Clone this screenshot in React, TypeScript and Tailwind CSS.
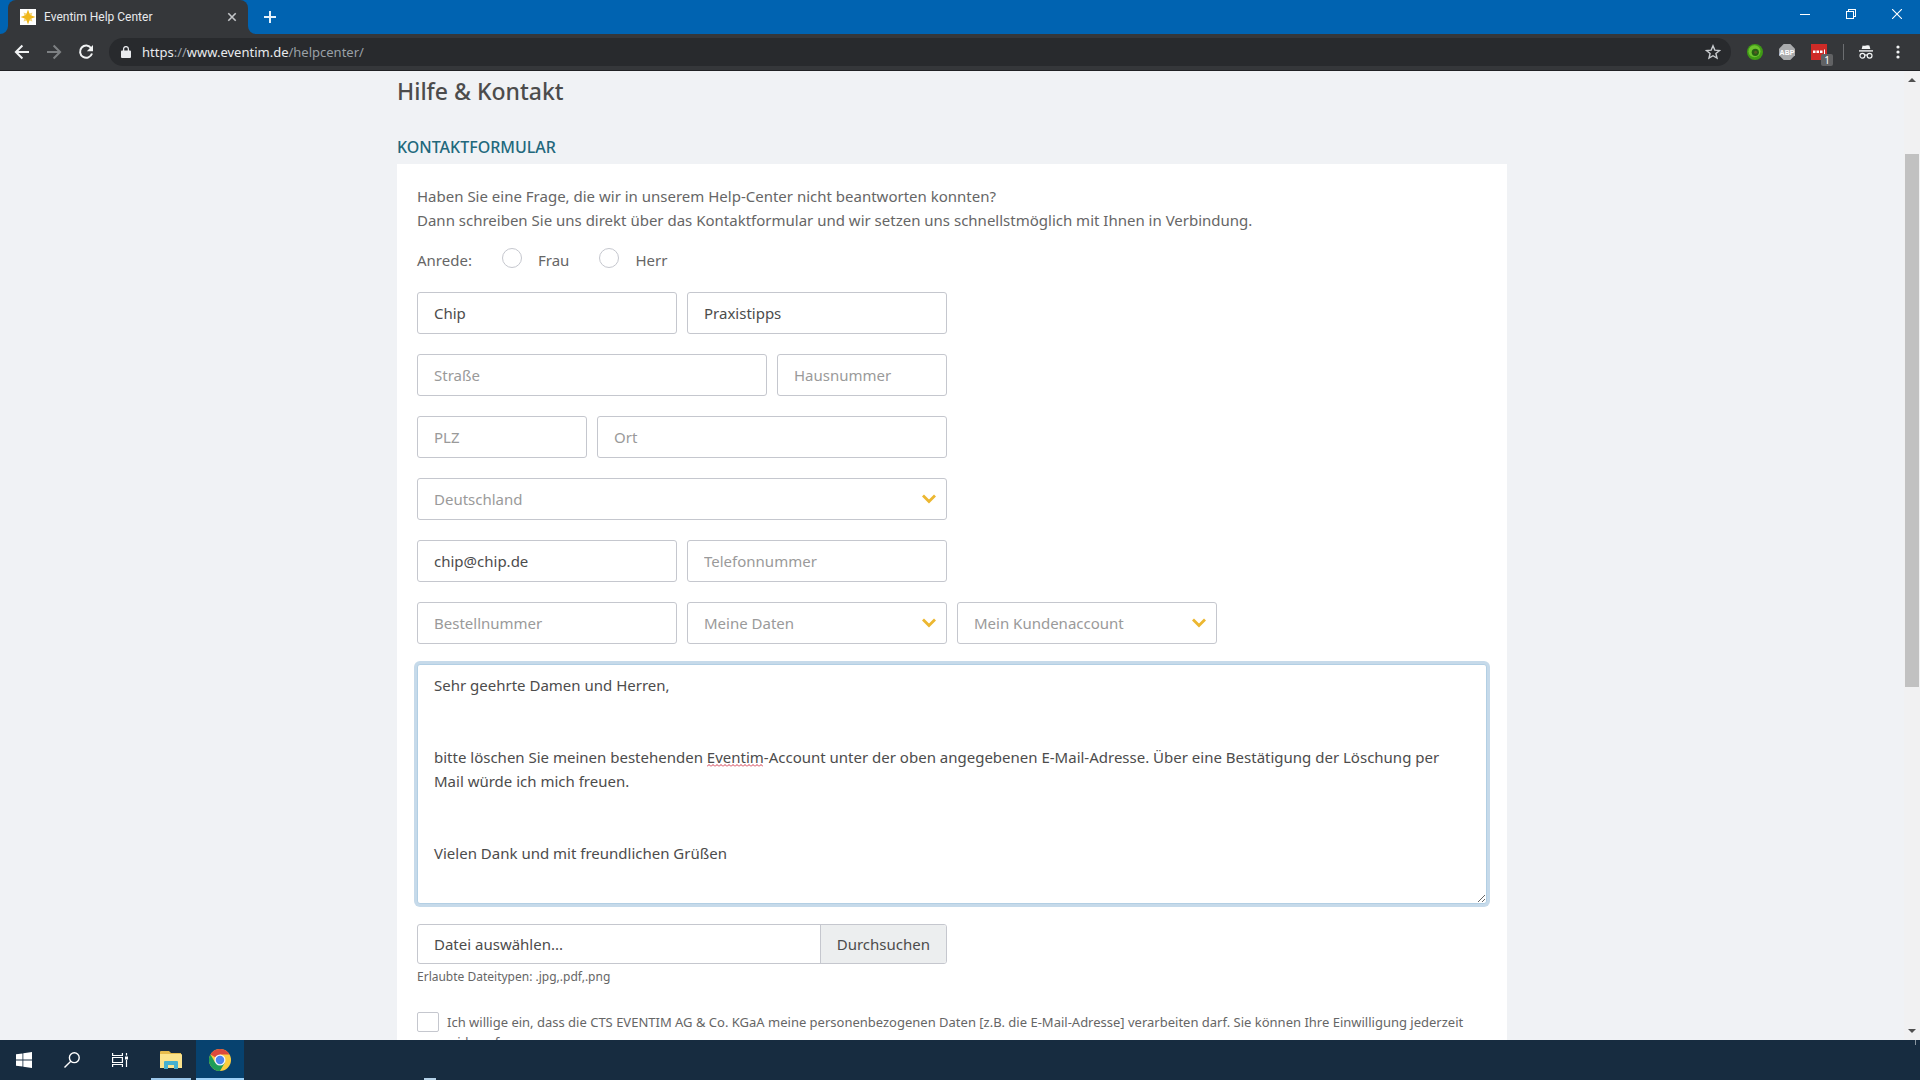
import { useState, ReactNode, InputHTMLAttributes, SelectHTMLAttributes } from 'react';

const MESSAGE = `Sehr geehrte Damen und Herren,


bitte löschen Sie meinen bestehenden Eventim-Account unter der oben angegebenen E-Mail-Adresse. Über eine Bestätigung der Löschung per Mail würde ich mich freuen.


Vielen Dank und mit freundlichen Grüßen`;

const fieldClass =
  'block h-[42px] w-full min-w-0 rounded-[3px] border border-[#c5c7ce] bg-white px-4 text-[15px] leading-6 placeholder:text-[#9a9a9a] placeholder:opacity-100 focus:outline-none focus:ring-3 focus:ring-[#c6daea]';

function Field({ label, ...props }: InputHTMLAttributes<HTMLInputElement> & { label: string }) {
  return <input aria-label={label} placeholder={label} className={`${fieldClass} text-[#4c4c4c]`} {...props} />;
}

function SelectField({ label, option, ...props }: SelectHTMLAttributes<HTMLSelectElement> & { label: string; option: string }) {
  return (
    <div className="relative min-w-0">
      <select aria-label={label} className={`${fieldClass} appearance-none text-[#9a9a9a]`} {...props}>
        <option>{option}</option>
      </select>
      <svg viewBox="0 0 14 10" className="pointer-events-none absolute top-4 right-[11px] h-[10px] w-[14px]" fill="none" stroke="#ecb731" strokeWidth="2.8">
        <path d="M1 1.500l6 6 6-6" />
      </svg>
    </div>
  );
}

function Radio({ label, value, onChange, checked }: { label: string; value: string; checked: boolean; onChange: (v: string) => void }) {
  return (
    <label className="flex items-start gap-4">
      <input
        type="radio"
        name="anrede"
        value={value}
        checked={checked}
        onChange={() => onChange(value)}
        className="h-5 w-5 appearance-none rounded-full border border-[#c5c7ce] bg-white checked:border-[6px] checked:border-[#ecb731]"
      />
      {label}
    </label>
  );
}

function IconButton({ label, className = '', children }: { label: string; className?: string; children: ReactNode }) {
  return (
    <button type="button" aria-label={label} className={`flex shrink-0 items-center justify-center ${className}`}>
      {children}
    </button>
  );
}

function TabStrip() {
  return (
    <div className="flex h-[34px] shrink-0 items-stretch bg-[#0063b1]">
      <div className="relative ml-2 flex w-60 items-center rounded-t-lg bg-[#35373a] pr-2 pl-3">
        <svg viewBox="0 0 8 8" className="absolute bottom-0 -left-2 h-2 w-2">
          <path d="M8 0v8H0a8 8 0 0 0 8-8z" fill="#35373a" />
        </svg>
        <svg viewBox="0 0 8 8" className="absolute -right-2 bottom-0 h-2 w-2">
          <path d="M0 0v8h8a8 8 0 0 1-8-8z" fill="#35373a" />
        </svg>
        <svg viewBox="0 0 16 16" className="mr-2 h-4 w-4 shrink-0">
          <path d="M0 0h16v16H0z" fill="#fff" />
          <path d="M3.500 3.500L8 5l4.500-1.500L11 8l1.500 4.500L8 11l-4.500 1.500L5 8z" fill="#f3d478" />
          <path d="M8 .5l2 5.500 5.500 2-5.500 2-2 5.500L6 10 .5 8 6 6z" fill="#efb71c" />
        </svg>
        <span className="flex-1 truncate font-['Roboto',sans-serif] text-xs text-[#e8eaed]">Eventim Help Center</span>
        <IconButton label="Tab schließen" className="h-4 w-4">
          <svg viewBox="0 0 16 16" className="h-4 w-4" stroke="#c4c6c9" strokeWidth="1.6">
            <path d="M4.300 4.300l7.400 7.400M11.700 4.300l-7.400 7.400" />
          </svg>
        </IconButton>
      </div>
      <IconButton label="Neuer Tab" className="ml-2 w-7">
        <svg viewBox="0 0 14 14" className="h-[14px] w-[14px]" stroke="#e6f2fb" strokeWidth="2">
          <path d="M7 1v12M1 7h12" />
        </svg>
      </IconButton>
      <div className="ml-auto flex pb-[6px]">
        <IconButton label="Minimieren" className="w-[46px]">
          <svg viewBox="0 0 10 10" className="h-[10px] w-[10px]" stroke="#fff" shapeRendering="crispEdges">
            <path d="M0 5.500h10" />
          </svg>
        </IconButton>
        <IconButton label="Verkleinern" className="w-[46px]">
          <svg viewBox="0 0 10 10" className="h-[10px] w-[10px]" fill="none" stroke="#fff" shapeRendering="crispEdges">
            <path d="M.5 2.500h7v7h-7zM2.500 2.500v-2h7v7h-2" />
          </svg>
        </IconButton>
        <IconButton label="Schließen" className="w-[46px]">
          <svg viewBox="0 0 10 10" className="h-[10px] w-[10px]" stroke="#fff" strokeWidth="1.1">
            <path d="M0 0l10 10M10 0L0 10" />
          </svg>
        </IconButton>
      </div>
    </div>
  );
}

function Toolbar() {
  return (
    <div className="flex h-[37px] shrink-0 items-center border-b border-[#202124] bg-[#35373a] px-[6px]">
      <IconButton label="Zurück" className="h-8 w-8">
        <svg viewBox="0 0 16 16" className="h-4 w-4" fill="none" stroke="#f1f3f4" strokeWidth="2">
          <path d="M15 8H2.200M8.400 1.500L1.900 8l6.500 6.500" />
        </svg>
      </IconButton>
      <IconButton label="Vorwärts" className="h-8 w-8">
        <svg viewBox="0 0 16 16" className="h-4 w-4" fill="none" stroke="#7d8083" strokeWidth="2">
          <path d="M1 8h12.800M7.600 1.500L14.100 8l-6.500 6.500" />
        </svg>
      </IconButton>
      <IconButton label="Neu laden" className="h-8 w-8">
        <svg viewBox="0 0 16 16" className="h-4 w-4">
          <path d="M13.200 4.200A6.100 6.100 0 1 0 14 9.500" fill="none" stroke="#f1f3f4" strokeWidth="2" />
          <path d="M15 1v6.200H8.800z" fill="#f1f3f4" />
        </svg>
      </IconButton>
      <div className="ml-[7px] flex h-7 flex-1 items-center rounded-full bg-[#282a2d] pr-[10px] pl-3">
        <svg viewBox="0 0 10 12" className="h-3 w-[10px] shrink-0">
          <path d="M1 4.500h8a1 1 0 0 1 1 1V11a1 1 0 0 1-1 1H1a1 1 0 0 1-1-1V5.500a1 1 0 0 1 1-1z" fill="#e8eaed" />
          <path d="M2.600 5V3a2.400 2.400 0 0 1 4.800 0v2" fill="none" stroke="#e8eaed" strokeWidth="1.3" />
        </svg>
        <span className="ml-[11px] flex-1 truncate pt-px text-[13px] text-[#9aa0a6]">
          <span className="text-[#e8eaed]">https</span>://<span className="text-[#e8eaed]">www.eventim.de</span>/helpcenter/
        </span>
        <IconButton label="Lesezeichen" className="h-4 w-4">
          <svg viewBox="0 0 16 16" className="h-4 w-4" fill="none" stroke="#c9cccf" strokeWidth="1.4">
            <path d="M8 1.800l1.800 4.300 4.700.4-3.600 3 1.100 4.600L8 11.700l-4 2.400 1.100-4.600-3.600-3 4.700-.4z" />
          </svg>
        </IconButton>
      </div>
      <div className="ml-4 flex items-center gap-4">
        <IconButton label="Erweiterung" className="h-4 w-4">
          <svg viewBox="0 0 16 16" className="h-4 w-4">
            <circle cx="8" cy="8" r="8" fill="#3f9a16" />
            <circle cx="7.500" cy="7.200" r="6" fill="#6cc22e" />
            <circle cx="8.300" cy="8.300" r="3.600" fill="#275f14" />
            <circle cx="8.600" cy="8.300" r="1.500" fill="#5a5a24" />
          </svg>
        </IconButton>
        <IconButton label="Adblock Plus" className="h-4 w-4">
          <svg viewBox="0 0 16 16" className="h-4 w-4">
            <path d="M4.700 0h6.600L16 4.700v6.600L11.300 16H4.700L0 11.300V4.700z" fill="#a9abad" />
            <text x="8" y="10.600" textAnchor="middle" fontSize="7" fontWeight="700" fontFamily="Liberation Sans, sans-serif" fill="#fff">
              ABP
            </text>
          </svg>
        </IconButton>
        <IconButton label="LastPass" className="relative h-4 w-4">
          <svg viewBox="0 0 16 16" className="h-4 w-4">
            <path d="M0 0h16v16H0z" fill="#cf2b27" />
            <path d="M2 6.500h2.500V9H2zM5.500 6.500H8V9H5.500zM9 6.500h2.500V9H9zM13 5.500h1V10h-1z" fill="#fff" />
          </svg>
          <span className="absolute top-[10px] left-[10px] h-3 w-3 rounded-[2px] bg-[#616264] text-center text-[10px] leading-3 text-white">1</span>
        </IconButton>
      </div>
      <div className="ml-4 h-4 w-px bg-[#6c6e71]" />
      <svg viewBox="0 0 16 16" className="mr-2 ml-[14px] h-4 w-4 shrink-0">
        <path d="M4.600 1.500Q6.500 2.200 8 1.500t3.400 0L12.300 5H3.700z" fill="#f1f3f4" />
        <path d="M1 6.200h14v1.400H1z" fill="#f1f3f4" />
        <g fill="none" stroke="#f1f3f4" strokeWidth="1.2">
          <circle cx="4.400" cy="11.700" r="2.400" />
          <circle cx="11.600" cy="11.700" r="2.400" />
          <path d="M6.800 11.300q1.200-.8 2.400 0" />
        </g>
      </svg>
      <IconButton label="Menü" className="h-8 w-8">
        <svg viewBox="0 0 4 14" className="h-[14px] w-1" fill="#f1f3f4">
          <circle cx="2" cy="2" r="1.600" />
          <circle cx="2" cy="7" r="1.600" />
          <circle cx="2" cy="12" r="1.600" />
        </svg>
      </IconButton>
    </div>
  );
}

function ContactForm() {
  const [anrede, setAnrede] = useState('');
  const [message, setMessage] = useState(MESSAGE);

  return (
    <form className="bg-white p-5 text-[15px] leading-6 text-[#666]" onSubmit={(e) => e.preventDefault()}>
      <p>
        Haben Sie eine Frage, die wir in unserem Help-Center nicht beantworten konnten?
        <br />
        Dann schreiben Sie uns direkt über das Kontaktformular und wir setzen uns schnellstmöglich mit Ihnen in Verbindung.
      </p>

      <div className="mt-4 mb-5 flex">
        <span className="w-[85px]">Anrede:</span>
        <div className="flex gap-[30px]">
          <Radio label="Frau" value="frau" checked={anrede === 'frau'} onChange={setAnrede} />
          <Radio label="Herr" value="herr" checked={anrede === 'herr'} onChange={setAnrede} />
        </div>
      </div>

      <div className="max-w-[530px] space-y-5">
        <div className="grid grid-cols-2 gap-[10px]">
          <Field label="Vorname" defaultValue="Chip" />
          <Field label="Nachname" defaultValue="Praxistipps" />
        </div>
        <div className="grid grid-cols-[1fr_170px] gap-[10px]">
          <Field label="Straße" />
          <Field label="Hausnummer" />
        </div>
        <div className="grid grid-cols-[170px_1fr] gap-[10px]">
          <Field label="PLZ" />
          <Field label="Ort" />
        </div>
        <SelectField label="Land" option="Deutschland" />
        <div className="grid grid-cols-2 gap-[10px]">
          <Field label="E-Mail" type="email" defaultValue="chip@chip.de" />
          <Field label="Telefonnummer" type="tel" />
        </div>
      </div>

      <div className="mt-5 grid max-w-[800px] grid-cols-3 gap-[10px]">
        <Field label="Bestellnummer" />
        <SelectField label="Thema" option="Meine Daten" />
        <SelectField label="Unterthema" option="Mein Kundenaccount" />
      </div>

      <div className="relative mt-5">
        <textarea
          aria-label="Nachricht"
          value={message}
          onChange={(e) => setMessage(e.target.value)}
          spellCheck={false}
          className="block h-60 w-full rounded-[3px] border border-[#b3cfe4] bg-white px-4 py-2 text-[15px] leading-6 text-[#4c4c4c] ring-3 ring-[#c6daea] outline-none"
        />
        {/* spell check mark under "Eventim" */}
        <svg className="pointer-events-none absolute top-[100px] left-[290px] h-[3px] w-14">
          <defs>
            <pattern id="squiggle" width="4" height="3" patternUnits="userSpaceOnUse">
              <path d="M0 2.500L2 .5l2 2" fill="none" stroke="#d0364a" />
            </pattern>
          </defs>
          <rect width="100%" height="3" fill="url(#squiggle)" />
        </svg>
      </div>

      <div className="mt-5 flex h-10 max-w-[530px] overflow-hidden rounded-[3px] border border-[#c5c7ce] text-[#4c4c4c]">
        <label htmlFor="datei" className="flex flex-1 items-center px-4">
          Datei auswählen...
        </label>
        <input id="datei" type="file" accept=".jpg,.pdf,.png" className="sr-only" />
        <button type="button" className="border-l border-[#c5c7ce] bg-[#eceeef] px-4">
          Durchsuchen
        </button>
      </div>
      <p className="mt-1 text-xs leading-[18px]">Erlaubte Dateitypen: .jpg,.pdf,.png</p>

      <label className="mt-[26px] flex gap-2 text-[13px] leading-5">
        <input
          type="checkbox"
          className="h-5 w-[22px] shrink-0 appearance-none rounded-[2px] border border-[#c5c7ce] bg-white checked:bg-[#ecb731]"
        />
        <span>
          Ich willige ein, dass die CTS EVENTIM AG &amp; Co. KGaA meine personenbezogenen Daten [z.B. die E-Mail-Adresse] verarbeiten darf. Sie können Ihre Einwilligung jederzeit widerrufen.
        </span>
      </label>
    </form>
  );
}

function Scrollbar() {
  return (
    <div className="flex w-4 shrink-0 flex-col items-center bg-[#f1f1f2]">
      <svg viewBox="0 0 8 4" className="mt-[7px] h-1 w-2" fill="#505050">
        <path d="M4 0l4 4H0z" />
      </svg>
      <div className="mt-[72px] h-[55%] w-[14px] bg-[#c1c1c1]" />
      <svg viewBox="0 0 8 4" className="mt-auto mb-[7px] h-1 w-2" fill="#505050">
        <path d="M0 0h8L4 4z" />
      </svg>
    </div>
  );
}

function Taskbar() {
  return (
    <div className="relative z-10 flex h-10 shrink-0 bg-[#172c40]">
      <IconButton label="Start" className="w-12">
        <svg viewBox="0 0 16 16" className="h-4 w-4" fill="#fff">
          <path d="M0 2.300l6.500-.9v6.200H0zM7.300 1.300L16 0v7.600H7.300zM0 8.400h6.500v6.200L0 13.700zM7.300 8.400H16V16l-8.700-1.300z" />
        </svg>
      </IconButton>
      <IconButton label="Suche" className="w-12">
        <svg viewBox="0 0 16 16" className="h-4 w-4" fill="none" stroke="#fff" strokeWidth="1.4">
          <circle cx="10.300" cy="5.700" r="4.900" />
          <path d="M6.800 9.200L.5 15.500" />
        </svg>
      </IconButton>
      <IconButton label="Taskansicht" className="w-12">
        <svg viewBox="0 0 16 16" className="h-4 w-4" fill="none" stroke="#fff" strokeWidth="1.2">
          <path d="M.6 1v2.500h9.800V1M.6 15v-2.500h9.800V15M.6 5.500h9.800v5H.6zM14.500 1v2.500M14.500 8v7" />
          <path d="M13 4.500h3v3h-3z" fill="#fff" stroke="none" />
        </svg>
      </IconButton>
      <IconButton label="Explorer" className="mx-[7px] w-10 border-b-2 border-[#9cc7ea] pt-[2px]">
        <svg viewBox="0 0 22 18" className="h-[18px] w-[22px]">
          <path d="M0 1a1 1 0 0 1 1-1h8l2 2h10v4H0z" fill="#e6bb4c" />
          <path d="M0 3h21a1 1 0 0 1 1 1v13H0z" fill="#fbe38c" />
          <path d="M4 18v-7a1 1 0 0 1 1-1h12a1 1 0 0 1 1 1v7h-4v-4H8v4z" fill="#45b0cf" />
        </svg>
      </IconButton>
      <IconButton label="Chrome" className="-ml-[2px] w-12 border-b-2 border-[#9cd0f7] bg-[#07426f] pt-[2px]">
        <svg viewBox="0 0 24 24" className="h-[22px] w-[22px]">
          <circle cx="12" cy="12" r="12" fill="#fccd3f" />
          <path d="M12 12L1.600 6A12 12 0 0 1 22.400 6H12z" fill="#dc4a3d" />
          <path d="M1.600 6A12 12 0 0 0 12 24l5.200-9-5.200-3L6.800 15z" fill="#1f9d58" />
          <circle cx="12" cy="12" r="6" fill="#f2f5f8" />
          <circle cx="12" cy="12" r="4.600" fill="#4c84ee" />
        </svg>
      </IconButton>
      <div className="mt-auto ml-[180px] h-[2px] w-3 bg-[#b5d2e8]" />
      <div className="mr-1 ml-auto h-[5px] w-px bg-[#8a96a0]" />
    </div>
  );
}

export default function App() {
  return (
    <div className="flex h-screen flex-col overflow-hidden bg-[#f0f2f5] font-['Noto_Sans','Open_Sans',sans-serif]">
      <TabStrip />
      <Toolbar />
      <div className="flex min-h-0 flex-1">
        <main className="min-w-0 flex-1 overflow-hidden">
          <div className="mx-auto max-w-[1110px] pt-1">
            <h1 className="text-[23px] leading-8 font-medium text-[#4c4c4c]">Hilfe &amp; Kontakt</h1>
            <h2 className="mt-7 mb-[5px] text-[16px] leading-6 font-medium text-[#22687c] uppercase">Kontaktformular</h2>
            <ContactForm />
          </div>
        </main>
        <Scrollbar />
      </div>
      <Taskbar />
    </div>
  );
}
